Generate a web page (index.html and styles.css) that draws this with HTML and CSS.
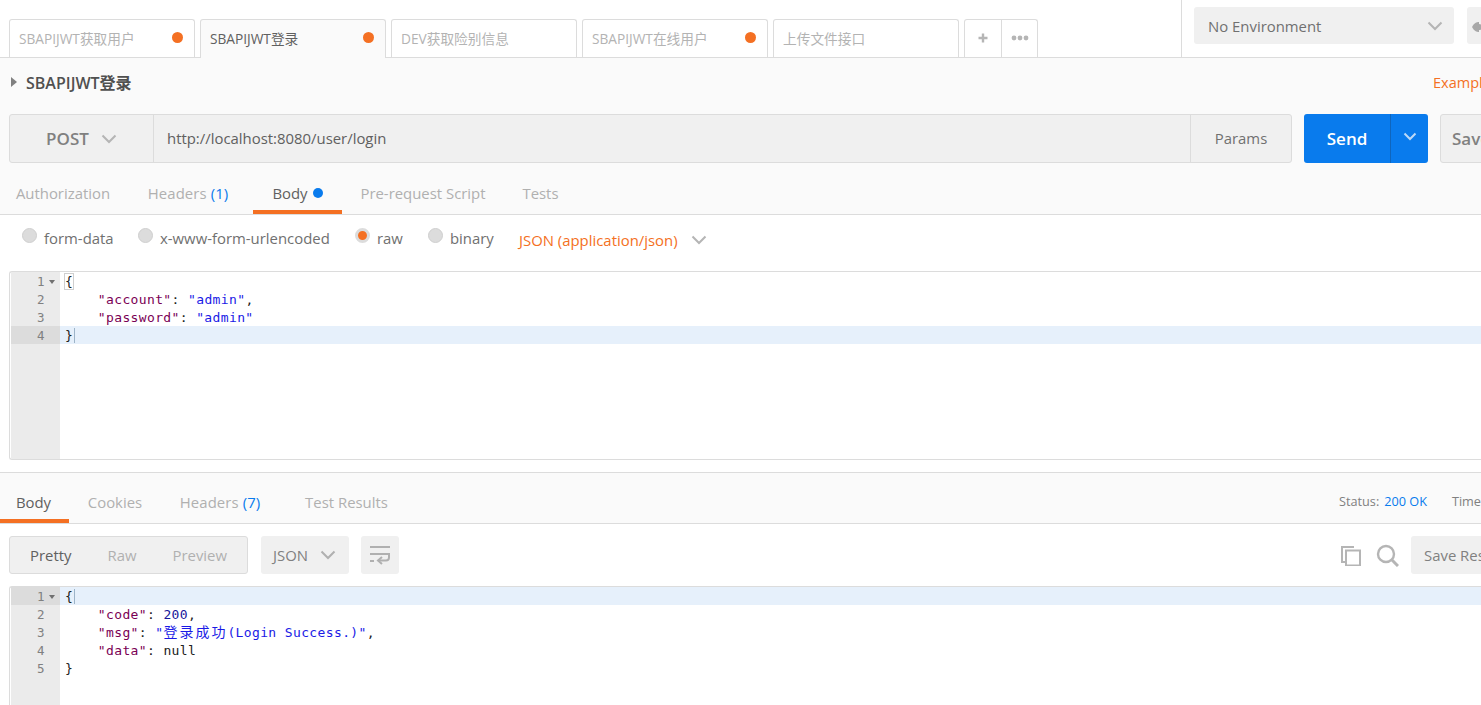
FILE: index.html
```html
<!DOCTYPE html>
<html lang="zh">
<head>
<meta charset="utf-8">
<title>SBAPIJWT登录</title>
<link rel="stylesheet" href="styles.css">
</head>
<body>
<header class="topbar">
  <div class="tabs">
    <div class="tab"><span class="tab-name">SBAPIJWT获取用户</span><i class="dot"></i></div>
    <div class="tab active"><span class="tab-name">SBAPIJWT登录</span><i class="dot"></i></div>
    <div class="tab"><span class="tab-name">DEV获取险别信息</span></div>
    <div class="tab"><span class="tab-name">SBAPIJWT在线用户</span><i class="dot"></i></div>
    <div class="tab"><span class="tab-name">上传文件接口</span></div>
    <div class="tab-tools">
      <div class="tool"><svg width="12" height="12" viewBox="0 0 12 12"><path d="M6 1.500V10.500M1.500 6H10.500" stroke="#b5b5b5" stroke-width="2.400"/></svg></div>
      <div class="tool"><svg width="18" height="6" viewBox="0 0 18 6"><circle cx="3" cy="3" r="2.400" fill="#b5b5b5"/><circle cx="9" cy="3" r="2.400" fill="#b5b5b5"/><circle cx="15" cy="3" r="2.400" fill="#b5b5b5"/></svg></div>
    </div>
  </div>
  <div class="env-area">
    <div class="env-select"><span>No Environment</span><svg class="chev" width="16" height="10" viewBox="0 0 16 10"><path d="M1.500 1.500L8 8L14.500 1.500" fill="none" stroke="#b5b5b5" stroke-width="2"/></svg></div>
    <div class="env-eye"><svg width="14" height="14" viewBox="0 0 14 14"><path d="M0 7C2 3 4.500 2 7 2V12C4.500 12 2 11 0 7Z" fill="#a8a8a8"/><circle cx="7" cy="7" r="3" fill="#a8a8a8"/></svg></div>
  </div>
</header>

<section class="request">
  <div class="title-row">
    <div class="title"><svg class="caret" width="6" height="10" viewBox="0 0 6 10"><path d="M0 0L6 5L0 10Z" fill="#808080"/></svg><span>SBAPIJWT登录</span></div>
    <span class="examples">Examples</span>
  </div>
  <div class="url-row">
    <div class="url-box">
      <div class="method"><span>POST</span><svg width="16" height="10" viewBox="0 0 16 10"><path d="M1.500 1.500L8 8L14.500 1.500" fill="none" stroke="#b5b5b5" stroke-width="2"/></svg></div>
      <div class="url">http://localhost:8080/user/login</div>
      <div class="params">Params</div>
    </div>
    <div class="send"><span class="send-label">Send</span><span class="send-more"><svg width="14" height="9" viewBox="0 0 14 9"><path d="M1.500 1.500L7 7L12.500 1.500" fill="none" stroke="#bcd9f7" stroke-width="2"/></svg></span></div>
    <div class="save">Save</div>
  </div>
  <nav class="req-tabs">
    <span class="rt rt-auth">Authorization</span>
    <span class="rt rt-head"><span>Headers <b class="count">(1)</b></span></span>
    <span class="rt rt-body on">Body<i class="bluedot"></i></span>
    <span class="rt rt-pre">Pre-request Script</span>
    <span class="rt rt-tests">Tests</span>
  </nav>
</section>

<section class="body-opts">
  <label class="opt opt-form"><i class="radio"></i>form-data</label>
  <label class="opt opt-url"><i class="radio"></i>x-www-form-urlencoded</label>
  <label class="opt opt-raw"><i class="radio sel"></i>raw</label>
  <label class="opt opt-bin"><i class="radio"></i>binary</label>
  <div class="ctype"><span>JSON (application/json)</span><svg width="16" height="10" viewBox="0 0 16 10"><path d="M1.500 1.500L8 8L14.500 1.500" fill="none" stroke="#b5b5b5" stroke-width="2"/></svg></div>
</section>

<section class="editor req-editor">
  <div class="gutter">
    <div class="ln">1<i class="fold"></i></div><div class="ln">2</div><div class="ln">3</div><div class="ln cur">4</div>
  </div>
  <div class="code">
    <div class="cl"><span class="br">{</span></div>
    <div class="cl">    <span class="k">"account"</span>: <span class="s">"admin"</span>,</div>
    <div class="cl">    <span class="k">"password"</span>: <span class="s">"admin"</span></div>
    <div class="cl cur"><span class="br2">}</span></div>
  </div>
</section>

<section class="response">
  <nav class="res-tabs">
    <span class="rs rs-body on">Body</span>
    <span class="rs rs-cook">Cookies</span>
    <span class="rs rs-head"><span>Headers <b class="count">(7)</b></span></span>
    <span class="rs rs-test">Test Results</span>
    <div class="status"><span>Status:</span><b class="count">200 OK</b><span class="time">Time: 20 ms</span></div>
  </nav>
  <div class="res-tools">
    <div class="views"><span class="v on">Pretty</span><span class="v">Raw</span><span class="v">Preview</span></div>
    <div class="fmt"><span>JSON</span><svg width="16" height="10" viewBox="0 0 16 10"><path d="M1.500 1.500L8 8L14.500 1.500" fill="none" stroke="#b0b0b0" stroke-width="2"/></svg></div>
    <div class="wrap"><svg width="22" height="20" viewBox="0 0 22 20"><path d="M1 2H21M1 9H20V12.500Q20 15.500 17 15.500H10M1 16H5" fill="none" stroke="#b0b0b0" stroke-width="2"/><path d="M13 12L9 15.500L13 19" fill="none" stroke="#b0b0b0" stroke-width="2"/></svg></div>
    <div class="res-right">
      <svg width="21" height="21" viewBox="0 0 21 21"><path d="M14 2H2V17H5" fill="none" stroke="#b5b5b5" stroke-width="2"/><rect x="6" y="5.500" width="14" height="15" fill="none" stroke="#b5b5b5" stroke-width="2"/></svg>
      <svg class="search" width="23" height="23" viewBox="0 0 23 23"><circle cx="10" cy="10" r="8" fill="none" stroke="#b5b5b5" stroke-width="2.400"/><path d="M16 16L22 22" stroke="#b5b5b5" stroke-width="3"/></svg>
      <div class="save-res">Save Response</div>
    </div>
  </div>
  <div class="editor res-editor">
    <div class="gutter">
      <div class="ln cur">1<i class="fold"></i></div><div class="ln">2</div><div class="ln">3</div><div class="ln">4</div><div class="ln">5</div>
    </div>
    <div class="code">
      <div class="cl cur"><span class="br2">{</span></div>
      <div class="cl">    <span class="k">"code"</span>: <span class="n">200</span>,</div>
      <div class="cl">    <span class="k">"msg"</span>: <span class="s">"<span class="cjk">登录成功</span>(Login Success.)"</span>,</div>
      <div class="cl">    <span class="k">"data"</span>: null</div>
      <div class="cl">}</div>
    </div>
  </div>
</section>
</body>
</html>
```
FILE: styles.css
```css
* { box-sizing: border-box; }
html, body { margin: 0; height: 705px; overflow: hidden; }
body { width: 1481px; background: #fff; font-family: "Open Sans", "Noto Sans CJK SC", sans-serif; font-size: 14.900px; color: #808080; }
i { display: block; font-style: normal; }
b { font-weight: 400; }

.topbar { display: flex; height: 58px; border-bottom: 1px solid #dcdcdc; }
.tabs { flex: none; display: flex; gap: 5px; width: 1182px; padding: 19px 0 0 9px; border-right: 1px solid #dcdcdc; }
.tab { display: flex; align-items: center; justify-content: space-between; width: 186px; height: 38px; padding: 0 11px 2px 9px; background: #fff; border: 1px solid #dcdcdc; border-bottom: 0; border-radius: 3px 3px 0 0; font-size: 13.700px; color: #b3b3b3; white-space: nowrap; }
.tab.active { height: 39px; padding-bottom: 3px; background: #fafafa; color: #606060; position: relative; }
.dot { width: 11px; height: 11px; border-radius: 50%; background: #f47023; }
.tab-tools { display: flex; height: 38px; border: 1px solid #dcdcdc; border-bottom: 0; border-radius: 3px 3px 0 0; }
.tool { display: flex; align-items: center; justify-content: center; width: 36px; padding-bottom: 2px; }
.tool + .tool { border-left: 1px solid #dcdcdc; }

.env-area { flex: 1; display: flex; gap: 13px; padding: 7px 0 0 12px; min-width: 0; overflow: hidden; }
.env-select { flex: none; display: flex; align-items: center; justify-content: space-between; width: 260px; height: 37px; padding: 0 11px 0 14px; background: #f0f0f0; border-radius: 3px; color: #707070; }
.env-eye { flex: none; width: 40px; height: 37px; padding: 11px 0 0 5px; background: #f0f0f0; border-radius: 3px; }

.request { height: 157px; background: #fafafa; border-bottom: 1px solid #dcdcdc; }
.title-row { display: flex; justify-content: space-between; align-items: center; height: 56px; padding: 0 0 9px 11px; white-space: nowrap; overflow: hidden; }
.title { display: flex; align-items: center; gap: 9px; font-size: 16px; font-weight: 600; color: #505050; }
.examples { flex: none; width: 48px; margin-top: 2px; overflow: hidden; color: #f47023; font-size: 14.500px; }

.url-row { display: flex; gap: 12px; height: 49px; padding-left: 9px; width: 1600px; }
.url-box { display: flex; width: 1283px; background: #f0f0f0; border: 1px solid #dcdcdc; border-radius: 3px; }
.method { display: flex; align-items: center; justify-content: center; gap: 12px; width: 144px; border-right: 1px solid #dcdcdc; font-size: 17px; font-weight: 600; color: #808080; }
.url { flex: 1; display: flex; align-items: center; padding: 0 0 2px 13px; color: #606060; }
.params { display: flex; align-items: center; justify-content: center; width: 101px; padding-bottom: 2px; border-left: 1px solid #dcdcdc; color: #707070; }
.send { display: flex; width: 124px; background: #097bed; border-radius: 3px; color: #fff; font-size: 17px; font-weight: 600; }
.send-label { display: flex; align-items: center; justify-content: center; width: 87px; border-right: 1px solid #0f65bc; }
.send-more { flex: 1; display: flex; align-items: center; justify-content: center; padding-bottom: 4px; }
.save { display: flex; align-items: center; width: 120px; padding-left: 11px; background: #f0f0f0; border: 1px solid #dcdcdc; border-radius: 3px; font-size: 17px; font-weight: 600; color: #808080; }

.req-tabs { display: flex; height: 51px; }
.rt { flex: none; display: flex; align-items: center; justify-content: center; height: 51px; padding-top: 9px; color: #b0b0b0; white-space: nowrap; }
.rt-auth { width: 126px; }
.rt-head { width: 124px; margin-right: 3px; letter-spacing: .1px; }
.rt-body { width: 89px; }
.rt-pre { width: 162px; }
.rt-tests { width: 73px; }
.rt.on { color: #606060; border-bottom: 4px solid #f47023; padding-top: 13px; }
.count { color: #097bed; }
.bluedot { width: 10px; height: 10px; margin-left: 5px; border-radius: 50%; background: #097bed; }

.body-opts { display: flex; align-items: center; height: 56px; padding: 0 0 10px 22px; white-space: nowrap; color: #707070; }
.opt { display: flex; align-items: center; gap: 7px; }
.opt-form { width: 116px; }
.opt-url { width: 217px; }
.opt-raw { width: 73px; }
.opt-bin { width: 91px; }
.radio { width: 15px; height: 15px; margin-top: -5px; border-radius: 50%; background: #dcdcdc; border: 1px solid #cfcfcf; }
.radio.sel { background: #f47023; border: 3px solid #dcdcdc; }
.ctype { display: flex; align-items: center; gap: 13px; margin-top: 4px; color: #f47023; }

.editor { display: flex; border: 1px solid #dcdcdc; border-radius: 3px 0 0 3px; margin-left: 9px; border-right: 0; }
.req-editor { height: 189px; }
.gutter { flex: none; width: 49px; margin-left: 1px; background: #ebebeb; color: #808080; font-family: "DejaVu Sans Mono", monospace; font-size: 12.500px; }
.ln { position: relative; height: 18px; line-height: 20px; padding-left: 26px; }
.ln.cur { background: #dcdcdc; }
.fold { position: absolute; left: 38px; top: 8px; width: 0; height: 0; border: 3.500px solid transparent; border-top: 4px solid #707070; border-bottom: 0; }
.code { flex: 1; min-width: 0; font-family: "DejaVu Sans Mono", monospace; font-size: 13px; letter-spacing: .37px; color: #202020; }
.cl { height: 18px; line-height: 20px; padding-left: 5px; white-space: pre; }
.cl.cur { background: #e6f0fb; }
.k { color: #7a0054; }
.s { color: #1a1ae6; }
.n { color: #16169a; }
.cjk { font-family: "Noto Sans CJK SC", sans-serif; font-size: 14px; line-height: 1; letter-spacing: 2px; }
.br { outline: 1px solid #cfcfcf; }
.br2 { border-right: 1px solid #9db4c8; padding-right: 1px; }

.response { margin-top: 12px; border-top: 1px solid #dcdcdc; }
.res-tabs { display: flex; height: 51px; background: #fafafa; border-bottom: 1px solid #dcdcdc; white-space: nowrap; overflow: hidden; }
.rs { flex: none; display: flex; align-items: center; justify-content: center; height: 50px; padding-top: 8px; color: #b0b0b0; }
.rs-body { width: 69px; padding-right: 2px; }
.rs-cook { width: 92px; }
.rs-head { width: 120px; padding-right: 2px; letter-spacing: .1px; }
.rs-test { width: 131px; }
.rs.on { color: #606060; border-bottom: 4px solid #f47023; padding-top: 12px; }
.status { flex: none; display: flex; align-items: center; width: 200px; height: 50px; margin-left: 927px; font-size: 12.700px; color: #808080; padding-top: 6px; }
.status .count { margin-left: 5px; }
.time { margin-left: 25px; }

.res-tools { display: flex; align-items: center; height: 62px; padding: 0 0 0 9px; width: 1600px; }
.views { display: flex; align-items: center; width: 239px; height: 38px; padding-left: 20px; background: #f0f0f0; border: 1px solid #dcdcdc; border-radius: 3px; color: #b0b0b0; gap: 36px; }
.v.on { color: #606060; }
.fmt { display: flex; align-items: center; gap: 12px; width: 88px; height: 38px; margin-left: 13px; padding-left: 12px; background: #f0f0f0; border-radius: 3px; color: #808080; }
.wrap { display: flex; align-items: center; justify-content: center; width: 38px; height: 38px; margin-left: 12px; background: #f0f0f0; border-radius: 3px; }
.res-right { display: flex; align-items: center; margin-left: 941px; }
.search { margin-left: 15px; }
.save-res { display: flex; align-items: center; width: 120px; height: 38px; margin-left: 12px; padding-left: 13px; background: #f0f0f0; border-radius: 3px; color: #808080; white-space: nowrap; }

.res-editor { height: 200px; border-bottom: 0; }
```
